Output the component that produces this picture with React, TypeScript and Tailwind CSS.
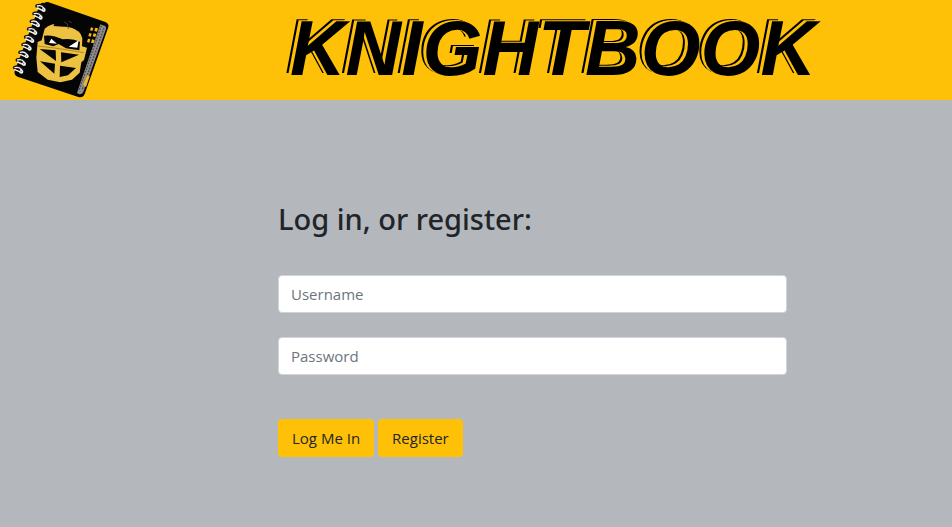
import React from "react";

const RINGS = [
  [128, 27], [119, 50], [111, 73], [103, 96], [94, 120], [86, 143], [77, 166], [69, 189], [61, 212],
];

function Logo() {
  return (
    <svg viewBox="0 0 390 300" className="h-[100px] w-[130px] shrink-0" role="img" aria-label="Knightbook logo">
      <path d="M134 9Q138 4 146 7L316 66Q328 71 325 82L254 282Q249 295 235 291L53 230Q41 225 44 213L119 15Q123 6 134 9Z" fill="#050505" />
      <path d="M301 73L315 78Q320 81 318 87L250 276Q246 284 238 283L231 279Z" fill="#8b8b8b" />
      <path d="M304 77L236 273M312 84L246 270" stroke="#4b4b4b" strokeWidth="4" strokeDasharray="5 4" />
      <path d="M249 256L261 226L269 229L258 261Z" fill="#eeb82d" />
      <path d="M273 82l7 2-3 9-7-2zM286 83l8 2-3 10-8-2zM268 99l7 2-3 9-7-2zM281 100l8 2-3 9-8-2zM264 116l7 2-3 10-7-2zM276 118l8 2-3 10-8-2z" fill="#f5b915" />
      <path d="M134 86Q164 62 207 76Q238 85 247 115L246 139L261 143L252 180L244 187L239 218L216 239L181 247L143 239L113 216L109 173L113 126L125 121Z" fill="#edc142" />
      <path d="M160 78Q172 49 205 50Q226 57 235 95Q217 79 191 80Z" fill="#050505" />
      <path d="M192 66l10 5 3 15M206 63l9 5" stroke="#3a3a3a" strokeWidth="3" fill="none" />
      <path d="M132 107Q157 103 188 118Q217 114 240 125L238 151L198 145L176 132L160 139L134 132Z" fill="#050505" />
      <path d="M147 129L154 116L171 131ZM206 140L236 121L232 143Z" fill="white" />
      <path d="M114 138L178 146L252 158" stroke="#b48a20" strokeWidth="3" fill="none" />
      <path d="M119 147L167 151L168 183ZM183 157L237 164L184 187ZM120 184L165 191L163 221ZM180 197L228 204L204 226L179 231Z" fill="#050505" />
      {RINGS.map(([x, y]) => (
        <g key={y} strokeLinecap="round">
          <path d={`M${x - 17} ${y - 9}q12-5 22 7`} fill="none" stroke="#161616" strokeWidth="11" />
          <path d={`M${x - 16} ${y - 9}q12-4 20 7M${x - 17} ${y - 3}q7 2 16 7`} fill="none" stroke="#f4f4f4" strokeWidth="4" />
          <circle cx={x + 3} cy={y + 3} r="6" fill="#f4f4f4" />
          <circle cx={x + 2} cy={y + 2} r="2" fill="#777777" />
        </g>
      ))}
    </svg>
  );
}

function Field({ id, label, type }: { id: string; label: string; type: string }) {
  return (
    <input
      id={id}
      name={id}
      type={type}
      aria-label={label}
      placeholder={label}
      className="h-[38px] w-full rounded border border-[#ced4da] bg-white px-3 text-[15px] text-[#212529] placeholder:text-[#6c757d]"
    />
  );
}

const buttonClass = "h-[38px] rounded bg-[#ffc107] px-[14px] text-[15px] text-[#212529]";

export default function App() {
  return (
    <div className="min-h-screen bg-[#b4b8bd] font-['Open_Sans','Noto_Sans',sans-serif] text-[#212529]">
      <header className="flex h-[100px] items-center bg-[#ffc107]">
        <Logo />
        <div className="flex flex-1 justify-center pb-1 pl-6">
          <h1 className="font-['Liberation_Sans',Arial,sans-serif] text-[77px] leading-none font-bold italic text-black [text-shadow:-3px_-1px_0_#ffc107,-5px_-2px_0_#000]">
            KNIGHTBOOK
          </h1>
        </div>
      </header>
      <main className="grid grid-cols-[278fr_509fr_165fr] pt-[100px]">
        <form className="col-start-2" onSubmit={(event) => event.preventDefault()}>
          <h2 className="font-['Noto_Sans',sans-serif] text-[29px] leading-[38px] font-medium">Log in, or register:</h2>
          <div className="mt-[37px] flex flex-col gap-6">
            <Field id="username" label="Username" type="text" />
            <Field id="password" label="Password" type="password" />
          </div>
          <div className="mt-11 flex gap-1">
            <button type="submit" className={buttonClass}>Log Me In</button>
            <button type="button" className={buttonClass}>Register</button>
          </div>
        </form>
      </main>
    </div>
  );
}
